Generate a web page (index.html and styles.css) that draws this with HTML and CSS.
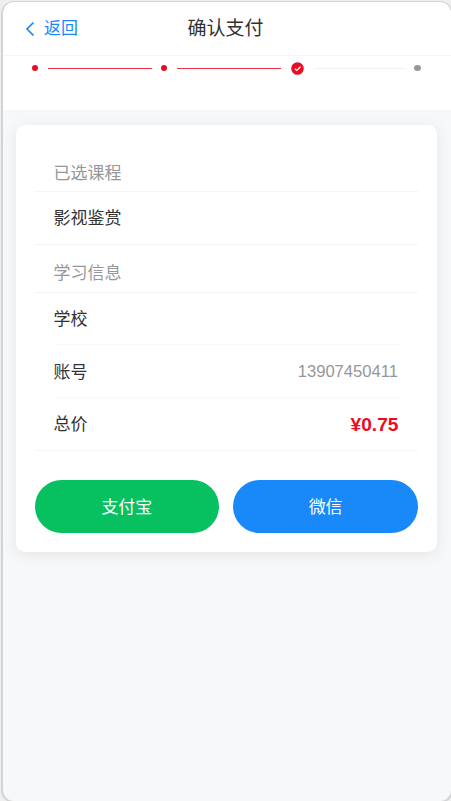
FILE: index.html
```html
<!DOCTYPE html>
<html lang="zh-CN">
<head>
<meta charset="utf-8">
<title>确认支付</title>
<link rel="stylesheet" href="styles.css">
</head>
<body>
<div class="phone">
  <header class="nav">
    <a class="back"><svg class="arrow" viewBox="0 0 10 16"><path d="M8.5 1.5 2 8l6.5 6.5"/></svg><span>返回</span></a>
    <h1 class="title">确认支付</h1>
    <span></span>
  </header>
  <div class="steps">
    <i class="dot"></i><i class="line"></i><i class="dot"></i><i class="line"></i>
    <svg class="check" viewBox="0 0 13 13"><circle cx="6.5" cy="6.5" r="6.3"/><path d="M3.9 6.7 5.7 8.4 9.6 4.7"/></svg>
    <i class="line pending"></i><i class="dot pending"></i>
  </div>
  <main class="card">
    <h2 class="group first">已选课程</h2>
    <div class="cells"><div class="cell course"><span>影视鉴赏</span></div></div>
    <h2 class="group">学习信息</h2>
    <div class="cells">
      <div class="cell school"><span>学校</span></div>
      <div class="cell account"><span>账号</span><span class="value">13907450411</span></div>
      <div class="cell total"><span>总价</span><span class="price">¥0.75</span></div>
    </div>
    <div class="actions">
      <button class="btn alipay">支付宝</button>
      <button class="btn wechat">微信</button>
    </div>
  </main>
</div>
</body>
</html>
```
FILE: styles.css
```css
* { box-sizing: border-box; }
html { height: 100%; overflow: hidden; }
body {
  margin: 0;
  height: 100%;
  padding: 1px 0 0 1px;
  overflow: hidden;
  background: #efefef;
  color: #323233;
  font-family: "Liberation Sans", "Noto Sans CJK SC", sans-serif;
  font-size: 17px;
}
.phone {
  width: 452px;
  height: 802px;
  border: 2px solid #d3d4d5;
  border-width: 1px 2px 2px;
  padding-top: 1px;
  border-radius: 13px;
  background: linear-gradient(#fff 2px, #f7f8fa 2px);
  overflow: hidden;
}
.nav {
  display: grid;
  grid-template-columns: 1fr auto 1fr;
  align-items: center;
  height: 53px;
  padding: 0 25px 0 22px;
  border-bottom: 1px solid #f5f5f6;
  background: #fff;
}
.back { display: flex; align-items: center; gap: 9px; color: #1989fa; line-height: 24px; }
.arrow { width: 10px; height: 16px; fill: none; stroke: #1989fa; stroke-width: 1.7; }
.title { margin: 0; font-size: 19px; line-height: 28px; font-weight: 400; }
.steps {
  display: flex;
  align-items: center;
  height: 54px;
  padding: 0 28px 30px 29.4px;
  background: #fff;
}
.dot { flex: none; width: 6px; height: 6px; border-radius: 50%; background: #ee0a24; }
.dot.pending { background: #969799; width: 7px; }
.line { flex: none; width: 104px; height: 1px; margin: 0 9px 0 10px; background: #ee3347; }
.line.pending { width: 90px; margin: 0 9px 0 11px; background: #f0f0f1; }
.check { flex: none; width: 13px; height: 13px; margin-left: 1px; fill: #ee0a24; }
.check path { fill: none; stroke: #fff; stroke-width: 1.2; }
.card {
  width: 421.5px;
  height: 427px;
  margin: 15px 0 0 12.5px;
  padding: 19px;
  border-radius: 9px;
  background: #fff;
  box-shadow: 0 3px 13px rgba(100, 101, 102, .12);
}
.group {
  height: 48px;
  margin: 0;
  padding: 15px 19px 0;
  border-bottom: 1px solid #f5f5f6;
  color: #969799;
  font-size: 17px;
  font-weight: 400;
  line-height: 28px;
}
.first { padding-top: 16px; }
.cells { border-bottom: 1px solid #f5f5f6; padding: 0 19px; }
.cell { display: flex; justify-content: space-between; align-items: center; height: 52px; line-height: 26px; }
.cell + .cell { border-top: 1px solid #f8f8f9; height: 53px; }
.course { padding-top: 2px; }
.school { height: 51px; padding-top: 3px; }
.account { padding-top: 4px; }
.total { padding-top: 2px; }
.value { margin: -2px 1px 0 0; color: #969799; font-size: 16.6px; }
.price { margin-right: .5px; color: #ee0a24; font-size: 19.2px; font-weight: 700; }
.actions { display: flex; gap: 14px; margin-top: 29px; }
.btn {
  flex: 1;
  height: 53px;
  padding: 0 0 3px;
  border: 0;
  border-radius: 27px;
  color: #fff;
  font: inherit;
}
.alipay { background: #07c160; }
.wechat { background: #1989fa; }
```
